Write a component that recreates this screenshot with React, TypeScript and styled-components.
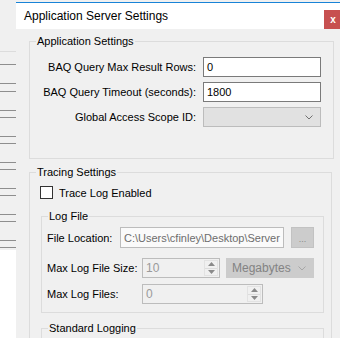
import React from "react";
import styled, { createGlobalStyle } from "styled-components";

const GlobalStyle = createGlobalStyle`
  html, body {
    margin: 0;
    padding: 0;
  }
  body {
    width: 340px;
    height: 338px;
    overflow: hidden;
    background: #f0f0f0;
    font-family: "Liberation Sans", Arial, sans-serif;
    font-size: 11px;
    color: #000;
  }
`;

const Screen = styled.div`
  display: flex;
  width: 340px;
  height: 338px;
  overflow: hidden;
`;

const BackWindow = styled.div`
  flex: 0 0 16px;
  display: flex;
  flex-direction: column;
  background: linear-gradient(#f0f0f0 0 250px, #ffffff 250px);
`;

const BackLine = styled.div<{ $gap: number; $light?: boolean }>`
  height: 1px;
  margin-top: ${({ $gap }) => $gap}px;
  background: ${({ $light }) => ($light ? "#dcdcdc" : "#8e8e8e")};
`;

const Dialog = styled.div`
  flex: 0 0 326px;
  margin-top: 2px;
  border-top: 1px solid #1883d7;
  display: flex;
  flex-direction: column;
  background: #f0f0f0;
`;

const TitleBar = styled.div`
  height: 30px;
  display: flex;
  align-items: center;
  padding-left: 8px;
  background: #ffffff;
`;

const Title = styled.span`
  font-size: 12px;
`;

const CloseButton = styled.div`
  align-self: flex-start;
  margin: 7px 0 0 auto;
  width: 18px;
  height: 19px;
  display: grid;
  place-items: center;
  background: #c75050;
  color: #ffffff;
  font-weight: bold;
  font-size: 10px;
  line-height: 1;
`;

const Body = styled.div`
  display: flex;
  flex-direction: column;
  padding: 5px 0 0 13px;
`;

const Group = styled.fieldset<{ $width: number; $pad: string; $mt?: number; $ml?: number }>`
  box-sizing: border-box;
  width: ${({ $width }) => $width}px;
  min-width: 0;
  margin: ${({ $mt = 0 }) => $mt}px 0 0 ${({ $ml = 0 }) => $ml}px;
  padding: ${({ $pad }) => $pad};
  border: 1px solid #dcdcdc;
`;

const Legend = styled.legend<{ $ml: number }>`
  margin-left: ${({ $ml }) => $ml}px;
  padding: 0 1px;
  font-size: 11px;
  line-height: 14px;
`;

const SettingsGrid = styled.div`
  display: grid;
  grid-template-columns: 166px 118px;
  grid-auto-rows: 20px;
  column-gap: 7px;
  row-gap: 5px;
  align-items: center;
`;

const GridLabel = styled.span`
  justify-self: end;
  white-space: nowrap;
`;

const TextBox = styled.div<{ $width?: number; $height?: number; $disabled?: boolean }>`
  box-sizing: border-box;
  width: ${({ $width }) => ($width ? `${$width}px` : "100%")};
  height: ${({ $height = 20 }) => $height}px;
  display: flex;
  align-items: center;
  padding-left: 3px;
  overflow: hidden;
  white-space: nowrap;
  background: ${({ $disabled }) => ($disabled ? "#fafafa" : "#ffffff")};
  border: 1px solid ${({ $disabled }) => ($disabled ? "#bcbcbc" : "#7a7a7a")};
  color: ${({ $disabled }) => ($disabled ? "#6d6d6d" : "#000")};
`;

const Combo = styled.div<{ $width?: number; $bg: string; $border: string }>`
  box-sizing: border-box;
  width: ${({ $width }) => ($width ? `${$width}px` : "100%")};
  height: 20px;
  display: flex;
  align-items: center;
  justify-content: space-between;
  padding: 0 7px 0 5px;
  background: ${({ $bg }) => $bg};
  border: 1px solid ${({ $border }) => $border};
  color: #838383;
  font-size: 12px;
`;

const CheckRow = styled.div`
  display: flex;
  align-items: center;
  gap: 6px;
  height: 13px;
`;

const CheckBox = styled.div`
  box-sizing: border-box;
  width: 13px;
  height: 13px;
  background: #ffffff;
  border: 1px solid #333333;
`;

const FieldRow = styled.div<{ $mt?: number }>`
  display: flex;
  align-items: center;
  margin-top: ${({ $mt = 0 }) => $mt}px;
`;

const RowLabel = styled.span<{ $width: number }>`
  flex: 0 0 ${({ $width }) => $width}px;
  white-space: nowrap;
`;

const BrowseButton = styled.div`
  box-sizing: border-box;
  width: 23px;
  height: 21px;
  margin-left: 7px;
  display: flex;
  align-items: flex-end;
  justify-content: center;
  padding-bottom: 3px;
  background: #cccccc;
  border: 1px solid #c2c2c2;
  color: #8a8a8a;
  font-size: 9px;
  line-height: 1;
`;

const SpinBox = styled.div<{ $width: number; $ml?: number }>`
  box-sizing: border-box;
  width: ${({ $width }) => $width}px;
  height: 20px;
  display: flex;
  align-items: stretch;
  padding: 1px;
  background: #f0f0f0;
  border: 1px solid #bcbcbc;
  color: #9a9a9a;
  font-size: 12px;
`;

const SpinValue = styled.span`
  flex: 1;
  display: flex;
  align-items: center;
  padding-left: 2px;
`;

const SpinButtons = styled.div`
  box-sizing: border-box;
  width: 14px;
  display: flex;
  flex-direction: column;
  border: 1px solid #e2e2e2;
  background: #f0f0f0;
`;

const SpinHalf = styled.div<{ $top?: boolean }>`
  flex: 1;
  display: grid;
  place-items: center;
  border-bottom: ${({ $top }) => ($top ? "1px solid #dcdcdc" : "none")};
`;

const Chevron = ({ color }: { color: string }) => (
  <svg width="8" height="5" viewBox="0 0 8 5">
    <path d="M0.5 0.5 L4 4 L7.5 0.5" fill="none" stroke={color} strokeWidth="1" />
  </svg>
);

const Arrow = ({ up }: { up?: boolean }) => (
  <svg width="7" height="4" viewBox="0 0 7 4">
    <path d={up ? "M0 4 L3.5 0 L7 4 Z" : "M0 0 L3.5 4 L7 0 Z"} fill="#8a8a8a" />
  </svg>
);

const Spin = ({ value, width }: { value: string; width: number }) => (
  <SpinBox $width={width}>
    <SpinValue>{value}</SpinValue>
    <SpinButtons>
      <SpinHalf $top>
        <Arrow up />
      </SpinHalf>
      <SpinHalf>
        <Arrow />
      </SpinHalf>
    </SpinButtons>
  </SpinBox>
);

const backLines = [51, 64, 83, 91, 110, 117, 136, 143, 162, 169, 188, 195, 214, 221, 240, 247];

export default function App() {
  return (
    <>
      <GlobalStyle />
      <Screen>
        <BackWindow>
          {backLines.map((y, i) => (
            <BackLine
              key={y}
              $light={i === 0}
              $gap={i === 0 ? y : y - backLines[i - 1] - 1}
            />
          ))}
        </BackWindow>
        <Dialog>
          <TitleBar>
            <Title>Application Server Settings</Title>
            <CloseButton>x</CloseButton>
          </TitleBar>
          <Body>
            <Group $width={305} $pad="9px 12px 31px 0">
              <Legend $ml={6}>Application Settings</Legend>
              <SettingsGrid>
                <GridLabel>BAQ Query Max Result Rows:</GridLabel>
                <TextBox>0</TextBox>
                <GridLabel>BAQ Query Timeout (seconds):</GridLabel>
                <TextBox>1800</TextBox>
                <GridLabel>Global Access Scope ID:</GridLabel>
                <Combo $bg="#e1e1e1" $border="#bcbcbc">
                  <span />
                  <Chevron color="#707070" />
                </Combo>
              </SettingsGrid>
            </Group>

            <Group $width={303} $pad="7px 7px 20px 10px" $mt={6}>
              <Legend $ml={-4}>Tracing Settings</Legend>
              <CheckRow>
                <CheckBox />
                <span>Trace Log Enabled</span>
              </CheckRow>

              <Group $width={283} $pad="4px 0 8px 5px" $mt={10} $ml={1}>
                <Legend $ml={1}>Log File</Legend>
                <FieldRow>
                  <RowLabel $width={73}>File Location:</RowLabel>
                  <TextBox $width={164} $height={21} $disabled>
                    C:\Users\cfinley\Desktop\Server
                  </TextBox>
                  <BrowseButton>...</BrowseButton>
                </FieldRow>
                <FieldRow $mt={10}>
                  <RowLabel $width={95}>Max Log File Size:</RowLabel>
                  <Spin value="10" width={78} />
                  <Combo $width={88} $bg="#cccccc" $border="#cccccc" style={{ marginLeft: 6 }}>
                    <span>Megabytes</span>
                    <Chevron color="#a6a6a6" />
                  </Combo>
                </FieldRow>
                <FieldRow $mt={6}>
                  <RowLabel $width={95}>Max Log Files:</RowLabel>
                  <Spin value="0" width={121} />
                </FieldRow>
              </Group>

              <Group $width={283} $pad="4px 0 30px 5px" $mt={8} $ml={1}>
                <Legend $ml={1}>Standard Logging</Legend>
              </Group>
            </Group>
          </Body>
        </Dialog>
      </Screen>
    </>
  );
}
